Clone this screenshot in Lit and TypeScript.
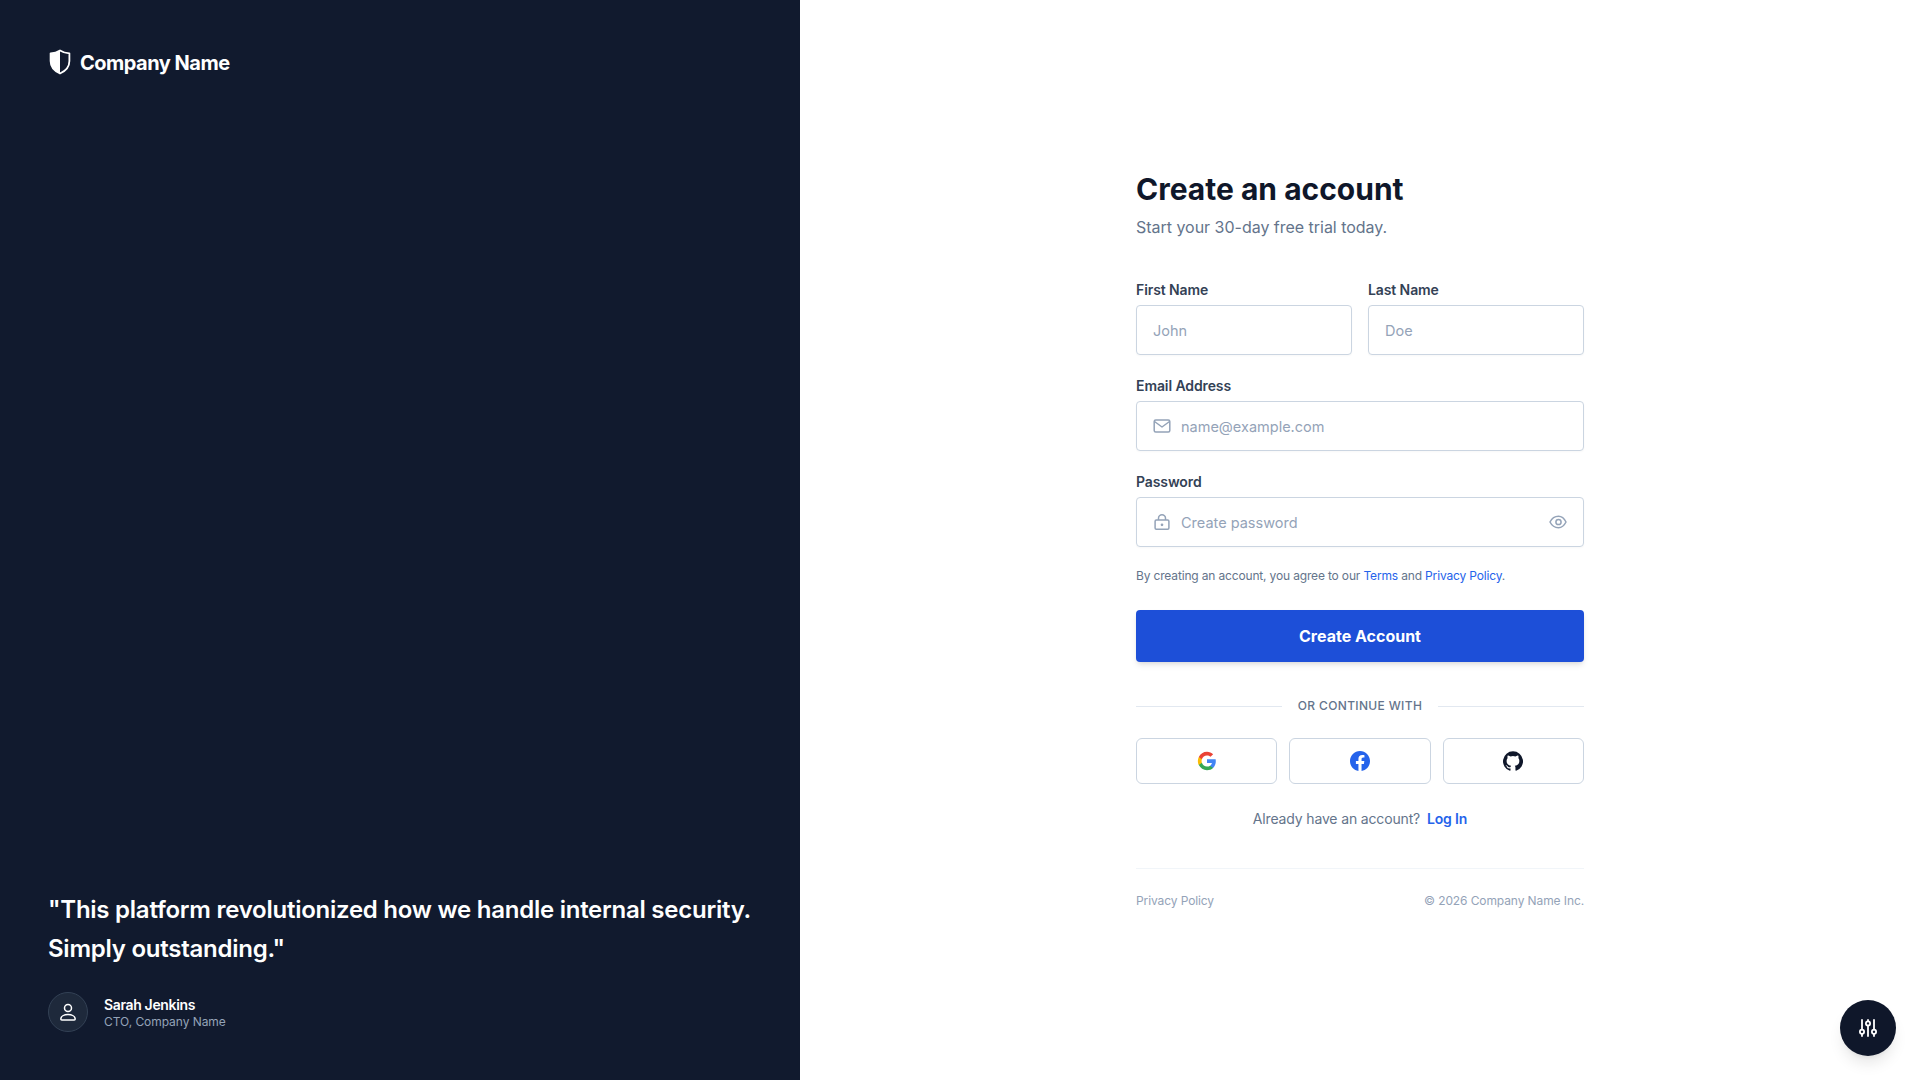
import { LitElement, html, css } from "lit";
import { customElement } from "lit/decorators.js";

@customElement("app-root")
export class AppRoot extends LitElement {
  static styles = css`
    :host { display: block; font-family: "Inter", "Liberation Sans", sans-serif; color: #0f172a; }
    * { box-sizing: border-box; }
    .page { display: flex; height: 1080px; background: #fff; overflow: hidden; }
    .left { width: 800px; flex: none; background: #111a2e; color: #fff; padding: 48px; display: flex; flex-direction: column; justify-content: space-between; }
    .brand { display: flex; align-items: center; gap: 8px; height: 28px; font-size: 20px; font-weight: 700; letter-spacing: -0.5px; line-height: 28px; }
    .brand span { padding-top: 2px; }
    .brand svg { display: block; width: 24px; height: 26px; }
    .quote { margin: 0 0 24px; font-size: 24px; line-height: 39px; font-weight: 600; letter-spacing: -0.25px; width: 720px; white-space: nowrap; }
    .person { display: flex; align-items: center; gap: 16px; }
    .avatar { width: 40px; height: 40px; border-radius: 50%; background: #1e293b; border: 1px solid #334155; display: flex; align-items: center; justify-content: center; }
    .pname { font-size: 14px; line-height: 17px; font-weight: 600; letter-spacing: -0.35px; margin-top: 1px; }
    .prole { font-size: 12px; line-height: 17px; color: #94a3b8; letter-spacing: -0.05px; }
    .right { flex: 1; display: flex; align-items: center; justify-content: center; }
    .form { width: 448px; display: flex; flex-direction: column; }
    h1 { margin: 0; font-size: 30px; line-height: 36px; font-weight: 700; letter-spacing: 0; color: #0f172a; }
    .sub { margin: 8px 0 0; font-size: 16px; line-height: 24px; color: #64748b; letter-spacing: -0.02px; }
    .fields { margin-top: 41px; display: flex; flex-direction: column; gap: 21px; }
    .row { display: flex; gap: 16px; }
    .field { flex: 1; min-width: 0; }
    label { display: block; font-size: 14px; line-height: 20px; font-weight: 600; color: #334155; margin-bottom: 5px; letter-spacing: -0.1px; }
    .input { height: 50px; border: 1px solid #cbd5e1; border-radius: 4px; background: #fff; display: flex; align-items: center; padding: 0 16px; font-size: 14.5px; color: #94a3b8; box-shadow: 0 1px 2px rgba(0,0,0,.03); gap: 10px; }
    .input .ph { flex: 1; padding-top: 1px; }
    .ico { display: block; flex: none; }
    .terms { margin: 21px 0 0; font-size: 12px; line-height: 16px; color: #64748b; letter-spacing: -0.16px; }
    a { color: #2563eb; text-decoration: none; }
    .cta { margin-top: 26px; height: 52px; border: 0; border-radius: 4px; background: #1d4fd8; color: #fff; font: 700 16px "Inter", sans-serif; letter-spacing: 0; box-shadow: 0 4px 6px -1px rgba(0,0,0,.1), 0 2px 4px -2px rgba(0,0,0,.1); display: flex; align-items: center; justify-content: center; }
    .divider { margin-top: 34px; display: flex; align-items: center; gap: 16px; font-size: 12px; line-height: 20px; font-weight: 500; color: #64748b; letter-spacing: 0.35px; }
    .divider i { flex: 1; height: 1px; background: #e2e8f0; }
    .social { margin-top: 22px; display: grid; grid-template-columns: 1fr 1fr 1fr; gap: 12px; }
    .sbtn { height: 46px; border: 1px solid #cbd5e1; border-radius: 6px; display: flex; align-items: center; justify-content: center; background: #fff; }
    .login { margin-top: 25px; text-align: center; font-size: 14px; line-height: 20px; color: #64748b; letter-spacing: -0.15px; }
    .login a { font-weight: 600; margin-left: 3px; }
    .foot { margin-top: 39px; padding-top: 24px; border-top: 1px solid #f1f5f9; display: flex; justify-content: space-between; font-size: 12px; line-height: 16px; color: #94a3b8; letter-spacing: -0.1px; }
    .fab { position: fixed; right: 24px; bottom: 24px; width: 56px; height: 56px; border-radius: 50%; background: #0f172a; display: flex; align-items: center; justify-content: center; box-shadow: 0 10px 15px -3px rgba(0,0,0,.1), 0 4px 6px -4px rgba(0,0,0,.1); }
  `;

  render() {
    return html`
      <div class="page">
        <aside class="left">
          <div class="brand">
            <svg viewBox="0 0 24 26" fill="none">
              <path d="M12 1.5 C9 3.4 6 4.2 2.6 4.3 V12 C2.6 18 6.4 22 12 24.5 C17.6 22 21.4 18 21.4 12 V4.3 C18 4.2 15 3.4 12 1.5 Z" stroke="#fff" stroke-width="1.8" stroke-linejoin="round"/>
              <path d="M12 1.5 C9 3.4 6 4.2 2.6 4.3 V12 C2.6 18 6.4 22 12 24.5 Z" fill="#fff"/>
            </svg>
            <span>Company Name</span>
          </div>
          <div>
            <p class="quote">"This platform revolutionized how we handle internal security.<br />Simply outstanding."</p>
            <div class="person">
              <div class="avatar">
                <svg width="20" height="20" viewBox="0 0 20 20" fill="none" stroke="#fff" stroke-width="1.5" stroke-linejoin="round"><circle cx="10" cy="6" r="3.5"/><path d="M2.8 17 C2.8 14.4 6 12.6 10 12.6 C14 12.6 17.2 14.4 17.2 17 Q17.2 18 16.2 18 H3.8 Q2.8 18 2.8 17 Z"/></svg>
              </div>
              <div>
                <div class="pname">Sarah Jenkins</div>
                <div class="prole">CTO, Company Name</div>
              </div>
            </div>
          </div>
        </aside>
        <main class="right">
          <div class="form">
            <h1>Create an account</h1>
            <p class="sub">Start your 30-day free trial today.</p>
            <div class="fields">
              <div class="row">
                <div class="field"><label>First Name</label><div class="input"><span class="ph">John</span></div></div>
                <div class="field"><label>Last Name</label><div class="input"><span class="ph">Doe</span></div></div>
              </div>
              <div class="field"><label>Email Address</label>
                <div class="input">
                  <svg class="ico" width="18" height="18" viewBox="0 0 18 18" fill="none" stroke="#94a3b8" stroke-width="1.5" stroke-linejoin="round"><rect x="1.2" y="3" width="15.6" height="12" rx="1.5"/><path d="M1.5 4.5 L9 10 L16.5 4.5"/></svg>
                  <span class="ph">name@example.com</span>
                </div>
              </div>
              <div class="field"><label>Password</label>
                <div class="input">
                  <svg class="ico" width="18" height="18" viewBox="0 0 18 18" fill="none" stroke="#94a3b8" stroke-width="1.5" stroke-linejoin="round"><rect x="2.1" y="7" width="13.8" height="9.2" rx="1.2"/><path d="M5.5 7 V5.2 A3.5 3.4 0 0 1 12.5 5.2 V7"/><circle cx="9" cy="11.8" r=".6"/></svg>
                  <span class="ph">Create password</span>
                  <svg class="ico" width="18" height="18" viewBox="0 0 18 18" fill="none" stroke="#94a3b8" stroke-width="1.5"><path d="M1 9 C3 5 6 3.3 9.5 3.3 C12.5 3.3 15 5 17 9 C15 13 12.5 14.7 9.5 14.7 C6 14.7 3 13 1 9 Z"/><circle cx="9.5" cy="9" r="2.6"/></svg>
                </div>
              </div>
            </div>
            <p class="terms">By creating an account, you agree to our <a>Terms</a> and <a>Privacy Policy</a>.</p>
            <div class="cta">Create Account</div>
            <div class="divider"><i></i><span>OR CONTINUE WITH</span><i></i></div>
            <div class="social">
              <div class="sbtn">
                <svg width="20" height="20" viewBox="0 0 24 24"><path fill="#4285F4" d="M22.56 12.25c0-.78-.07-1.53-.2-2.25H12v4.26h5.92c-.26 1.37-1.04 2.53-2.21 3.31v2.77h3.57c2.08-1.92 3.28-4.74 3.28-8.09z"/><path fill="#34A853" d="M12 23c2.97 0 5.46-.98 7.28-2.66l-3.57-2.77c-.98.66-2.23 1.06-3.71 1.06-2.86 0-5.29-1.93-6.16-4.53H2.18v2.84C3.99 20.53 7.7 23 12 23z"/><path fill="#FBBC05" d="M5.84 14.09c-.22-.66-.35-1.36-.35-2.09s.13-1.43.35-2.09V7.07H2.18C1.43 8.55 1 10.22 1 12s.43 3.45 1.18 4.93l2.85-2.22.81-.62z"/><path fill="#EA4335" d="M12 5.38c1.62 0 3.06.56 4.21 1.64l3.15-3.15C17.45 2.09 14.97 1 12 1 7.7 1 3.99 3.47 2.18 7.07l3.66 2.84c.87-2.6 3.3-4.53 6.16-4.53z"/></svg>
              </div>
              <div class="sbtn">
                <svg width="20" height="20" viewBox="0 0 24 24"><path fill="#2563eb" d="M24 12.07C24 5.4 18.63 0 12 0S0 5.4 0 12.07c0 6.03 4.39 11.02 10.13 11.93v-8.44H7.08v-3.49h3.05V9.41c0-3.02 1.79-4.69 4.53-4.69 1.31 0 2.68.24 2.68.24v2.97h-1.51c-1.49 0-1.96.93-1.96 1.89v2.25h3.33l-.53 3.49h-2.8V24C19.61 23.09 24 18.1 24 12.07z"/></svg>
              </div>
              <div class="sbtn">
                <svg width="20" height="20" viewBox="0 0 24 24"><path fill="#0f172a" d="M12 .3a12 12 0 0 0-3.8 23.38c.6.12.83-.26.83-.57l-.02-2.2c-3.34.73-4.04-1.42-4.04-1.42-.55-1.39-1.33-1.76-1.33-1.76-1.09-.74.08-.73.08-.73 1.2.09 1.84 1.24 1.84 1.24 1.07 1.83 2.81 1.3 3.49 1 .11-.78.42-1.31.76-1.61-2.67-.3-5.47-1.33-5.47-5.93 0-1.31.47-2.38 1.24-3.22-.14-.3-.54-1.52.1-3.18 0 0 1-.32 3.3 1.23a11.5 11.5 0 0 1 6 0c2.28-1.55 3.29-1.23 3.29-1.23.64 1.66.24 2.88.12 3.18a4.65 4.65 0 0 1 1.23 3.22c0 4.61-2.8 5.63-5.48 5.92.42.36.81 1.1.81 2.22l-.01 3.29c0 .31.2.69.82.57A12 12 0 0 0 12 .3z"/></svg>
              </div>
            </div>
            <div class="login">Already have an account? <a>Log In</a></div>
            <div class="foot"><span>Privacy Policy</span><span>© 2026 Company Name Inc.</span></div>
          </div>
        </main>
      </div>
      <div class="fab">
        <svg width="20" height="20" viewBox="0 0 20 20" fill="none" stroke="#fff" stroke-width="1.8" stroke-linecap="round"><path d="M4 2v9.5M4 16v2M10 2v1.2M10 7.6V18M16 2v9.5M16 16v2"/><circle cx="4" cy="13.7" r="2.1"/><circle cx="10" cy="5.4" r="2.1"/><circle cx="16" cy="13.7" r="2.1"/></svg>
      </div>
    `;
  }
}
